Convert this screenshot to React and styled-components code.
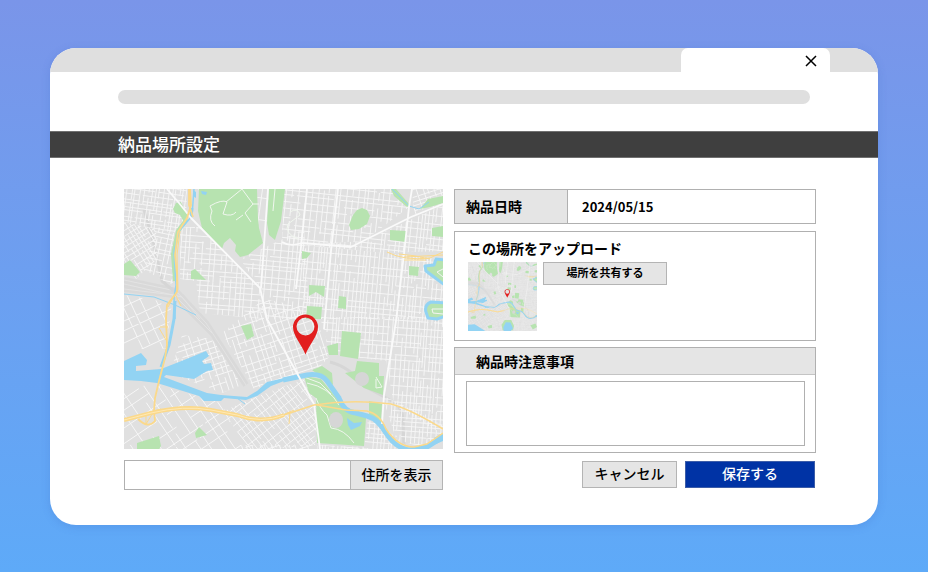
import React, { useId } from "react";
import styled, { createGlobalStyle } from "styled-components";

const GlobalStyle = createGlobalStyle`
  *, *::before, *::after { box-sizing: border-box; }
  html { min-height: 100%; background: linear-gradient(#7a95e9, #5eaaf8); }
  body { margin: 0; }
  body, button, input, textarea {
    font-family: "Noto Sans CJK JP", "Noto Sans", sans-serif;
    font-size: 14px;
    font-weight: 700;
    line-height: 20px;
    color: #000;
  }
`;

const line = "#b0b0b0";
const fill = "#e5e5e5";

const Page = styled.div`
  min-height: 100vh;
  padding: 48px 50px 47px;
`;

const Window = styled.main`
  overflow: hidden;
  padding-bottom: 35px;
  border-radius: 26px;
  background: #fff;
  box-shadow: 0 2px 8px rgba(60, 100, 190, 0.22);
`;

const TabStrip = styled.div`
  display: flex;
  justify-content: flex-end;
  height: 24px;
  padding-right: 48px;
  background: #dfdfdf;
`;

const Tab = styled.div`
  display: flex;
  justify-content: flex-end;
  align-items: center;
  width: 149px;
  padding: 2px 9px 0;
  border-radius: 7px 7px 0 0;
  background: #fff;
`;

const CloseButton = styled.button`
  display: flex;
  padding: 0;
  border: 0;
  background: none;
`;

const AddressBar = styled.div`
  height: 14px;
  margin: 18px 68px 27px;
  border-radius: 7px;
  background: #dfdfdf;
`;

const Title = styled.h1`
  margin: 0;
  padding: 0 68px 1px;
  border: 1px solid #707070;
  border-width: 1px 0;
  background: #3f3f3f;
  color: #fff;
  font-size: 17px;
  font-weight: 500;
  line-height: 24px;
`;

const Columns = styled.form`
  display: grid;
  grid-template-columns: minmax(0, 319fr) minmax(0, 362fr);
  align-items: start;
  gap: 11px;
  padding: 31px 62px 0 74px;
`;

const MapColumn = styled.section`
  display: grid;
  grid-template-columns: minmax(0, 1fr);
  gap: 11px;
`;

const MapView = styled.svg`
  display: block;
  width: 100%;
  height: auto;
`;

const Thumbnail = styled(MapView)`
  width: 69px;
  flex: none;
`;

const SearchRow = styled.div`
  display: flex;
  height: 30px;
`;

const SearchInput = styled.input`
  flex: 1;
  min-width: 0;
  padding: 0 10px;
  border: 1px solid ${line};
  border-right: 0;
  background: #fff;
`;

const Button = styled.button`
  width: ${(p) => p.$width}px;
  padding: 0 0 3px;
  border: 1px solid ${(p) => (p.$primary ? "#3c5da8" : "#b4b4b4")};
  background: ${(p) => (p.$primary ? "#0033a5" : fill)};
  color: ${(p) => (p.$primary ? "#fff" : "#000")};
  font-weight: 500;
`;

const DetailColumn = styled.section`
  display: flex;
  flex-direction: column;
`;

const DateRow = styled.div`
  display: flex;
  height: 35px;
  border: 1px solid ${line};
`;

const DateLabel = styled.label`
  width: 113px;
  padding: 6px 11px;
  border-right: 1px solid ${line};
  background: ${fill};
`;

const DateInput = styled.input`
  flex: 1;
  min-width: 0;
  padding: 1px 14px 0;
  border: 0;
  background: #fff;
  font-size: 13px;
`;

const UploadPanel = styled.div`
  min-height: 110px;
  margin-top: 7px;
  padding: 6px 13px 9px;
  border: 1px solid ${line};
`;

const UploadTitle = styled.h2`
  margin: 0 0 4px;
  font-size: 14px;
  font-weight: 700;
  line-height: 20px;
`;

const UploadBody = styled.div`
  display: flex;
  align-items: flex-start;
  gap: 6px;
`;

const ShareButton = styled(Button)`
  height: 23px;
  padding-bottom: 4px;
  font-size: 11px;
  font-weight: 700;
  line-height: 16px;
`;

const NotesPanel = styled.div`
  margin-top: 6px;
  border: 1px solid ${line};
`;

const NotesLabel = styled.label`
  display: block;
  height: 27px;
  padding: 3px 21px;
  border-bottom: 1px solid #c4c4c4;
  background: ${fill};
`;

const NotesBody = styled.div`
  padding: 6px 10px 6px 11px;
`;

const NotesInput = styled.textarea`
  display: block;
  width: 100%;
  height: 65px;
  padding: 6px;
  border: 1px solid ${line};
  background: #fff;
  resize: none;
`;

const Actions = styled.div`
  display: flex;
  justify-content: flex-end;
  gap: 8px;
  height: 27px;
  margin: 8px 1px 0 0;
`;

/* Seeded generator, so the street layout is the same on every render. */
function randomFrom(seed) {
  let s = seed;
  return () => {
    s = (s * 16807) % 2147483647;
    return s / 2147483647;
  };
}

function streetPath({ box: [x0, y0, x1, y1], gap: [gx, gy], seed }) {
  const rnd = randomFrom(seed);
  let d = "";
  for (let x = x0; x < x1; x += gx * (0.6 + rnd() * 0.8)) {
    for (let y = y0; y < y1; ) {
      const len = gy * (1 + rnd() * 6);
      d += `M${x.toFixed(1)} ${y.toFixed(1)}v${len.toFixed(1)}`;
      y += len + (rnd() < 0.5 ? gy * rnd() * 2 : 0);
    }
  }
  for (let y = y0; y < y1; y += gy * (0.6 + rnd() * 0.8)) {
    for (let x = x0; x < x1; ) {
      const len = gx * (1 + rnd() * 7);
      d += `M${x.toFixed(1)} ${y.toFixed(1)}h${len.toFixed(1)}`;
      x += len + (rnd() < 0.5 ? gx * rnd() * 2 : 0);
    }
  }
  return d;
}

const districts = [
  { area: "0,0 63,0 62,28 50,44 32,40 0,33", angle: 8, box: [-10, -20, 80, 60], gap: [4, 5], seed: 11 },
  { area: "0,33 32,40 33,70 12,90 0,74", angle: -32, box: [-50, 0, 60, 120], gap: [4, 5], seed: 23 },
  { area: "32,38 50,44 49,96 36,90 20,80", angle: 12, box: [0, 0, 90, 110], gap: [6, 5], seed: 31 },
  { area: "56,38 78,38 136,99 140,130 76,124 72,92 56,90", angle: 4, box: [40, 10, 170, 140], gap: [6, 6], seed: 47 },
  { area: "116,70 180,40 186,130 142,130 136,99", angle: 5, box: [100, 20, 210, 140], gap: [6, 6], seed: 59 },
  { area: "74,0 148,0 140,54 78,38", angle: 8, box: [70, -30, 180, 70], gap: [16, 18], seed: 61 },
  { area: "160,0 268,0 285,18 240,52 178,56 158,50", angle: 6, box: [140, -40, 320, 80], gap: [5, 7], seed: 67 },
  { area: "288,0 319,0 319,14 290,26", angle: -18, box: [270, 70, 340, 150], gap: [6, 6], seed: 71 },
  { area: "240,52 319,16 319,62 262,64 178,56", angle: 6, box: [170, -20, 340, 90], gap: [5, 7], seed: 73 },
  { area: "178,56 262,64 319,70 319,130 180,130", angle: 5, box: [160, 20, 350, 140], gap: [4, 8], seed: 79 },
  { area: "196,128 319,128 319,246 270,216 262,172 206,165", angle: 4, box: [180, 100, 350, 270], gap: [4, 7], seed: 83 },
  { area: "98,144 140,110 190,120 205,168 196,178 130,200", angle: -18, box: [20, 120, 180, 280], gap: [6, 7], seed: 97 },
  { area: "58,146 88,150 118,196 98,204 46,184", angle: -18, box: [-30, 130, 110, 260], gap: [6, 7], seed: 101 },
  { area: "126,210 180,190 193,214 193,256 120,262 100,222", angle: -38, box: [-60, 200, 120, 360], gap: [5, 7], seed: 103 },
  { area: "34,196 98,214 120,262 70,300 0,319 0,198", angle: -34, box: [-190, 110, 60, 330], gap: [10, 14], seed: 107 },
  { area: "118,256 193,256 210,319 60,319", angle: -18, box: [-60, 250, 170, 400], gap: [6, 7], seed: 109 },
  { area: "244,230 262,240 286,260 319,260 319,319 205,319 195,256 240,258", angle: 5, box: [190, 170, 360, 330], gap: [4, 6], seed: 113 },
  { area: "258,206 319,236 319,246 296,258 272,250", angle: 4, box: [250, 160, 350, 260], gap: [4, 6], seed: 127 },
  { area: "0,106 48,114 42,160 0,160", angle: -25, box: [-70, 90, 60, 210], gap: [14, 14], seed: 131 },
].map((district) => ({ ...district, d: streetPath(district) }));

const parks = [
  "75,0 133,0 134,29 135,39 139,54 124,66 116,68 111,62 112,56 106,49 100,54 98,60 78,39 74,22",
  "145,0 161,0 157,32 151,51 145,46 143,34",
  "49,20 52,14 57,13 61,22 64,27 60,33 56,26 51,24",
  "0,75 6,71 16,83 12,87 0,86",
  "67,82 71,80 82,91 67,90",
  "227,41 225,36 229,26 233,21 238,19 243,21 246,27 243,35 235,40",
  "266,41 282,42 282,53 266,51",
  "308,39 319,37 319,48 308,47",
  "285,77 295,78 294,87 285,86",
  "178,62 187,64 183,69 178,70",
  "185,96 201,97 200,108 192,103 185,107",
  "183,117 198,118 197,130 182,130",
  "215,107 222,108 222,120 214,119",
  "267,0 272,0 286,16 283,18 270,7",
  "296,20 304,10 319,7 319,14 306,18",
  "117,137 127,135 130,147 123,151",
  "13,254 35,247 37,257 34,262 13,262",
  "71,244 75,238 83,246 72,249",
  "218,142 237,144 234,170 216,167",
  "203,157 214,154 214,166 205,166",
  "233,172 255,174 255,187 260,187 259,206 240,199 221,184 231,182",
  "188,181 198,177 208,184 209,196 200,190",
  "180,187 197,190 210,206 220,217 242,229 240,257 193,254 192,209 185,204",
  "245,212 258,215 257,234 245,228",
  "155,290 170,268 200,268 213,296 208,315 160,315",
  "288,292 312,284 319,300 300,312",
  "90,296 110,290 112,304 96,308",
];

const arterials =
  "M43 0 55 14 67 29 136 99 143 130 190 215 196 260 M144 0 137 99 M183 0 177 58 172 100 M214 0 207 62 200 140 " +
  "M288 0 285 18 280 65 272 132 260 206 258 235 M319 15 287 28 227 58 178 54 Q166 58 158 53 142 51Q140 38 128 34 " +
  "Q113 29 100 37 Q92 41 67 37L0 30 M165 60 262 63 M285 18 255 42 M0 130 28 137Q66 138 84 156L102 182 105 215 95 229 " +
  "M88 150 123 196 M104 202 145 192 200 170 M52 174 90 150 M200 166 262 173 M214 142 216 170 M40 130 22 155 " +
  "M136 152 123 196 138 222 158 260 M160 192 130 230 100 262 M35 194 84 225 112 262 M0 196 42 201 80 215 120 217 " +
  "M181 125 186 155 199 180 M200 178Q212 186 206 206L260 212 M319 85 200 72 M242 21 319 35 M60 235 84 210 M0 210 28 210";

const parkPaths =
  "M91 37Q84 32 88 22L86 17Q98 10 103 13L99 25Q108 28 112 23M102 13 118 0 129 15 121 24 127 33M112 31 119 26 M129 15 135 15 " +
  "M166 23Q174 18 176 26L164 35Q160 44 174 50 M183 194Q205 198 215 216 M192 209Q196 220 203 226L207 239Q220 240 230 254 " +
  "M252 190 252 199 258 198 252 188 M151 0 149 22 M180 188 196 194 207 205";

const railBands = "M0 91 52 102 82 134 122 196M0 100 50 106 88 144M0 95 58 108 76 130";
const railSpurs = "M20 20 30 55 38 92 52 104M206 173Q226 178 240 197L266 211Q278 217 279 230L280 260";

const freeway = "M0 231 27 224Q60 216 87 221L113 226Q137 235 160 226";
const highway = `${freeway}L190 216Q228 210 267 215Q286 220 319 240`;

function MapDrawing() {
  const id = useId();
  return (
    <g fill="none" strokeLinejoin="round">
      <path fill="#e0e0e0" d="M0 0h319v319H0z" />
      <path d={railBands} stroke="#d9d9d9" strokeWidth="6" />
      <path d={railBands} stroke="#e3e3e3" strokeWidth="1" />
      <path d={railSpurs} stroke="#d6d6d6" strokeWidth="3" />
      {districts.map((district, i) => (
        <g key={district.seed}>
          <clipPath id={`${id}-${i}`}>
            <polygon points={district.area} />
          </clipPath>
          <g clipPath={`url(#${id}-${i})`}>
            <path d={district.d} transform={`rotate(${district.angle})`} stroke="#f6f6f6" strokeWidth="0.9" />
          </g>
        </g>
      ))}
      {parks.map((points) => (
        <polygon key={points} points={points} fill="#b7e3b0" />
      ))}
      <path d="M63 30 54 42 49 65 51 92" stroke="#b7e3b0" strokeWidth="4" />
      <path d={parkPaths} stroke="#f0f6ee" strokeWidth="1" />
      <circle cx="238" cy="190" r="7" fill="#d6d6d6" />
      <ellipse cx="212" cy="231" rx="7" ry="8" fill="#d6d6d6" />

      <g fill="#92d3f3">
        <path d="M0 172 17 164 23 171 22 176 12 177 12 182 37 180 60 171 82 162 85 167 78 172 80 175 87 174 89 181 83 182 70 190 42 186 40 188 83 204 97 206 123 208 133 202 143 193 160 189V192L147 197 133 207 122 211 100 209 97 212 80 212 75 207 33 194 17 192 0 191Z" />
        <path d="M223 229 230 234 238 233 236 237 227 241 224 236ZM69 1 72 3 72 9 69 7ZM77 2 83 3 82 6 78 5ZM310 249 319 244 319 252 312 255Z" />
        <path d="M0 290 31 288 80 319 0 319ZM163 302 175 278 196 280 208 306 198 319 165 319Z" />
      </g>
      <g stroke="#92d3f3">
        <path d="M159 191 183 186Q197 184 203 192L215 209Q220 223 232 224L243 227Q254 230 262 244Q272 260 287 261L303 258 319 248" strokeWidth="5" />
        <path d="M70 0 68 27 55 42 50 63 52 96 50 109 51 130" strokeWidth="1.5" />
        <path d="M68 19 67 28M51 112 50 130 47 146 45 156 37 178" strokeWidth="3" />
        <path d="M0 105 30 108 51 116 72 126M268 0 285 17 295 20 305 13M113 209 121 215" strokeWidth="1" />
        <path d="M322 71 312 70 310 76 301 77 302 82 310 88 322 97" fill="#b7e3b0" strokeWidth="3" />
        <path d="M322 114 307 113Q300 116 302 123L304 129 313 130 322 127" fill="#b7e3b0" strokeWidth="3" />
      </g>
      <path d="M319 80 313 83 319 88M319 120 308 120 309 124 319 125" stroke="#f4f4f4" strokeWidth="1" />
      <path d={arterials} stroke="#fafafa" strokeWidth="1.8" />
      <g stroke="#fbd98b">
        <path d={highway} strokeWidth="1.5" />
        <path d={freeway} strokeWidth="4" />
        <path d="M65 0 65 16 69 28M66 0 67 16 63 29 54 43 51 66 53 86 53 103 43 116 42 130 43 156 41 169 35 192 31 209 30 222 31 232Q24 240 14 230" strokeWidth="1.8" />
        <path d="M56 42 53 66 54 100 44 118M51 105 57 117M35 139 42 151M36 138H44M22 226 22 235 30 222 37 220M161 225 166 223 165 235M155 228 170 221" strokeWidth="1" />
        <path d="M193 216 222 221 243 222Q256 225 262 240Q274 258 290 258L303 255 319 244" strokeWidth="1.5" />
        <path d="M263 63Q280 72 306 69L319 63M275 65Q290 66 306 70M280 68 300 67 319 66M280 71H302" strokeWidth="1" />
      </g>
      <path d={freeway} stroke="#ffe9b5" strokeWidth="1" />
      <path
        fill="#e21f1f"
        fillRule="evenodd"
        d="M181.5 165.5C178 156 169 147 169 138A12.5 12.5 0 0 1 194 138C194 147 185 156 181.5 165.5ZM181.5 128.5A9 9 0 1 0 181.5 146.5A9 9 0 1 0 181.5 128.5Z"
      />
    </g>
  );
}

export default function App() {
  return (
    <>
      <GlobalStyle />
      <Page>
        <Window>
          <TabStrip>
            <Tab>
              <CloseButton type="button" aria-label="閉じる">
                <svg width="20" height="20" viewBox="0 0 20 20" fill="none" stroke="#000" strokeWidth="1.5">
                  <path d="m5 5 10 10M15 5 5 15" />
                </svg>
              </CloseButton>
            </Tab>
          </TabStrip>
          <AddressBar />
          <Title>納品場所設定</Title>
          <Columns onSubmit={(e) => e.preventDefault()}>
            <MapColumn>
              <MapView viewBox="0 0 319 260" role="img" aria-label="地図">
                <MapDrawing />
              </MapView>
              <SearchRow>
                <SearchInput type="text" aria-label="住所" />
                <Button type="button" $width={93}>住所を表示</Button>
              </SearchRow>
            </MapColumn>
            <DetailColumn>
              <DateRow>
                <DateLabel htmlFor="delivery-date">納品日時</DateLabel>
                <DateInput id="delivery-date" type="text" defaultValue="2024/05/15" />
              </DateRow>
              <UploadPanel>
                <UploadTitle>この場所をアップロード</UploadTitle>
                <UploadBody>
                  <Thumbnail viewBox="0 0 319 319" role="img" aria-label="選択した場所">
                    <MapDrawing />
                  </Thumbnail>
                  <ShareButton type="button" $width={124}>場所を共有する</ShareButton>
                </UploadBody>
              </UploadPanel>
              <NotesPanel>
                <NotesLabel htmlFor="delivery-notes">納品時注意事項</NotesLabel>
                <NotesBody>
                  <NotesInput id="delivery-notes" />
                </NotesBody>
              </NotesPanel>
              <Actions>
                <Button type="button" $width={95}>キャンセル</Button>
                <Button type="submit" $width={130} $primary>保存する</Button>
              </Actions>
            </DetailColumn>
          </Columns>
        </Window>
      </Page>
    </>
  );
}
